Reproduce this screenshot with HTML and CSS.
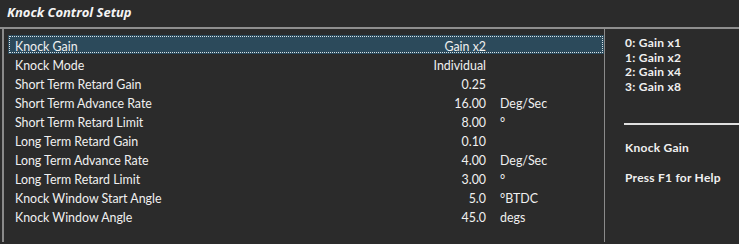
FILE: index.html
```html
<!DOCTYPE html>
<html lang="en">
<head>
  <meta charset="UTF-8">
  <title>Knock Control Setup</title>
  <link rel="stylesheet" href="styles.css">
</head>
<body>
  <div class="window">
    <div class="titlebar">Knock Control Setup</div>
    <div class="body">
      <div class="grid">
        <div class="row selected"><span class="name">Knock Gain</span><span class="value">Gain x2</span><span class="unit"></span></div>
        <div class="row"><span class="name">Knock Mode</span><span class="value">Individual</span><span class="unit"></span></div>
        <div class="row"><span class="name">Short Term Retard Gain</span><span class="value">0.25</span><span class="unit"></span></div>
        <div class="row"><span class="name">Short Term Advance Rate</span><span class="value">16.00</span><span class="unit">Deg/Sec</span></div>
        <div class="row"><span class="name">Short Term Retard Limit</span><span class="value">8.00</span><span class="unit">°</span></div>
        <div class="row"><span class="name">Long Term Retard Gain</span><span class="value">0.10</span><span class="unit"></span></div>
        <div class="row"><span class="name">Long Term Advance Rate</span><span class="value">4.00</span><span class="unit">Deg/Sec</span></div>
        <div class="row"><span class="name">Long Term Retard Limit</span><span class="value">3.00</span><span class="unit">°</span></div>
        <div class="row"><span class="name">Knock Window Start Angle</span><span class="value">5.0</span><span class="unit">°BTDC</span></div>
        <div class="row"><span class="name">Knock Window Angle</span><span class="value">45.0</span><span class="unit">degs</span></div>
      </div>
      <div class="help">
        <div class="options">
          <div>0: Gain x1</div>
          <div>1: Gain x2</div>
          <div>2: Gain x4</div>
          <div>3: Gain x8</div>
        </div>
        <hr class="divider">
        <div class="help-title">Knock Gain</div>
        <div class="help-hint">Press F1 for Help</div>
      </div>
    </div>
  </div>
</body>
</html>
```

FILE: styles.css
```css
body {
  margin: 0;
  background: #2b2b2b;
  font-family: "Open Sans", "Noto Sans", sans-serif;
  color: #f0f0f0;
}
.window {
  width: 739px;
  height: 244px;
  overflow: hidden;
  background: #2b2b2b;
}
.titlebar {
  height: 29px;
  box-sizing: border-box;
  padding: 3px 0 0 7px;
  font-size: 13px;
  font-weight: bold;
  font-style: italic;
  color: #f4f4f4;
  border-bottom: 2px solid #8e8e8e;
}
.body {
  display: flex;
  height: 213px;
}
.grid {
  margin-left: 2px;
  width: 603px;
  border-left: 2px solid #8a8a8a;
  border-right: 1px solid #8a8a8a;
  padding: 6px 0 0 4px;
  box-sizing: border-box;
}
.row {
  display: flex;
  height: 19.1px;
  align-items: center;
  font-family: "Lato", "Open Sans", sans-serif;
  font-size: 12.4px;
  box-sizing: border-box;
  padding-left: 7px;
  padding-top: 3px;
}
.row.selected {
  background: #2c4a5b;
  outline: 1px dotted #d8e4ea;
  outline-offset: -2px;
}
.name {
  width: 340px;
}
.value {
  width: 131px;
  text-align: right;
}
.unit {
  padding-left: 14px;
}
.help {
  flex: 1;
  padding: 7px 0 0 20px;
  font-family: "Lato", "Open Sans", sans-serif;
  font-size: 12px;
  letter-spacing: 0.25px;
  font-weight: bold;
}
.options {
  line-height: 14.7px;
}
.divider {
  border: none;
  border-top: 2px solid #e0e0e0;
  margin: 28px 0 0 -1px;
}
.help-title {
  margin-top: 15px;
}
.help-hint {
  margin-top: 15px;
}
```
